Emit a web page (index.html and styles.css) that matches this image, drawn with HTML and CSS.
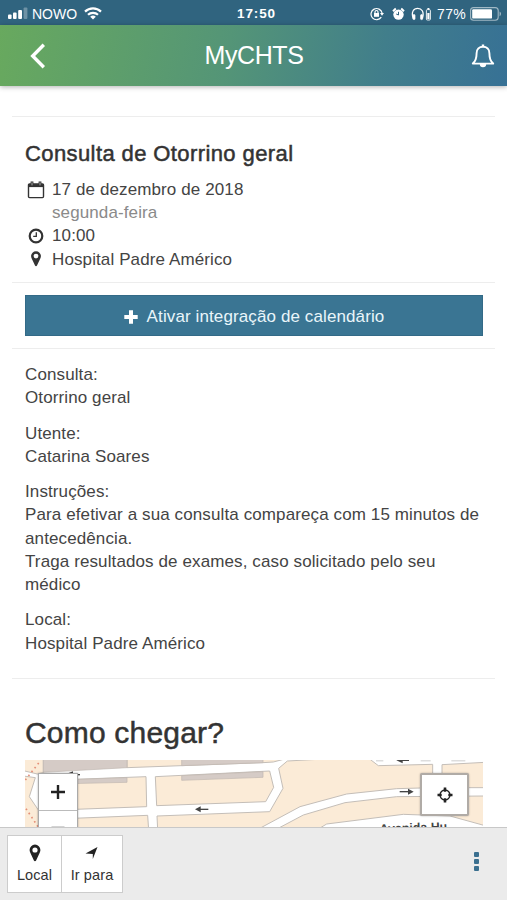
FILE: index.html
```
<!DOCTYPE html>
<html lang="pt">
<head>
    <meta charset="UTF-8">
    <meta name="viewport" content="width=device-width, initial-scale=1.0">
    <title>MyCHTS</title>
    <link rel="stylesheet" href="styles.css">
</head>
<body>

    <!-- Phone status bar -->
    <div class="status-bar">
        <div class="status-left">
            <svg width="20" height="13" viewBox="0 0 20 13" fill="#fff">
                <rect x="0" y="7.5" width="3.6" height="4.5" rx="1"/>
                <rect x="5" y="5.5" width="3.6" height="6.5" rx="1"/>
                <rect x="10.2" y="3" width="3.8" height="9" rx="1"/>
                <rect x="15.6" y="0.5" width="3.8" height="11.5" rx="1" opacity=".3"/>
            </svg>
            <span class="carrier">NOWO</span>
            <svg class="wifi" width="18" height="13" viewBox="0 0 18 13" fill="none" stroke="#fff" stroke-width="2.2">
                <path d="M1 4.6a11.5 11.5 0 0 1 16 0"/>
                <path d="M4 7.8a7.2 7.2 0 0 1 10 0"/>
                <path d="M9 12.6L6.2 9.8a4 4 0 0 1 5.6 0z" fill="#fff" stroke="none"/>
            </svg>
        </div>
        <span class="clock">17:50</span>
        <div class="status-right">
            <svg width="14" height="14" viewBox="0 0 14 14" fill="none" stroke="#fff" stroke-width="1.2">
                <path d="M11.3 10.2A5.6 5.6 0 1 1 12.1 6"/>
                <path d="M10 6h4l-2 2.8z" fill="#fff" stroke="none"/>
                <rect x="4" y="6" width="5" height="3.8" fill="#fff" stroke="none"/>
                <path d="M5 6.5V5a1.5 1.5 0 0 1 3 0v1.5"/>
            </svg>
            <svg class="alarm" width="13" height="14" viewBox="0 0 13 14">
                <circle cx="6.5" cy="7.6" r="5.2" fill="#fff"/>
                <path d="M1 4.2L3.8 1.6M12 4.2L9.2 1.6" stroke="#fff" stroke-width="2"/>
                <path d="M6.5 4.8V8l-2.3-1" fill="none" stroke="#30647f" stroke-width="1"/>
            </svg>
            <svg width="20" height="14" viewBox="0 0 20 14" fill="none" stroke="#fff" stroke-width="1.3">
                <path d="M2.2 11.5C-.2 4.5 3 1.3 6.7 1.3s7 3.2 4.6 10.2"/>
                <rect x="2" y="7.6" width="2" height="5" rx=".8" fill="#fff" stroke-width=".7"/>
                <rect x="9.6" y="7.6" width="2" height="5" rx=".8" fill="#fff" stroke-width=".7"/>
                <rect x="15.4" y="2.6" width="4" height="10.4" rx="1" stroke-width=".9"/>
                <path d="M16.4 1h2v1.6h-2zM16.3 6h2.2v6h-2.2z" fill="#fff" stroke="none"/>
            </svg>
            <span class="percent">77%</span>
            <svg width="32" height="14" viewBox="0 0 32 14">
                <rect x=".6" y=".6" width="27.6" height="12.6" rx="3" fill="none" stroke="#fff" stroke-opacity=".55" stroke-width="1.1"/>
                <rect x="2.2" y="2.2" width="19.8" height="9.4" rx="1.2" fill="#fff"/>
                <path d="M29.6 4.6c1.8.8 1.8 3.8 0 4.6z" fill="#fff" fill-opacity=".6"/>
            </svg>
        </div>
    </div>

    <!-- App header -->
    <header>
        <svg class="back" width="16" height="26" viewBox="0 0 16 26" fill="none" stroke="#fff" stroke-width="3.4">
            <path d="M13.8 1.8L2.7 13l11.1 11.2"/>
        </svg>
        <div class="title">MyCHTS</div>
        <svg class="bell" width="24" height="26" viewBox="0 0 24 26">
            <path d="M1.8 20.6C4.9 18 5.6 14.6 5.6 10.2 5.6 6.4 8.2 3.7 12 3.7s6.4 2.7 6.4 6.5c0 4.4.7 7.8 3.8 10.4z" fill="none" stroke="#fff" stroke-width="1.9" stroke-linejoin="round"/>
            <path d="M10.8 1.6h2.4v2.2h-2.4zM8.8 21h6.4a3.2 3.2 0 0 1-6.4 0z" fill="#fff"/>
        </svg>
    </header>

    <!-- Appointment -->
    <main>
        <section class="summary">
            <h2>Consulta de Otorrino geral</h2>
            <ul>
                <li>
                    <svg width="18" height="18" viewBox="0 0 18 18" fill="none" stroke="#333">
                        <rect x="1.5" y="3" width="15" height="13.6" rx="1" stroke-width="1.4"/>
                        <path d="M1 4.6h16" stroke-width="3"/>
                        <path d="M5 .4v4.4M13 .4v4.4" stroke-width="2.8"/>
                        <path d="M5 1.4v3M13 1.4v3" stroke="#ccc" stroke-width=".8"/>
                    </svg>
                    17 de dezembro de 2018
                </li>
                <li class="weekday">segunda-feira</li>
                <li>
                    <svg width="18" height="18" viewBox="0 0 18 18" fill="none" stroke="#333">
                        <circle cx="9" cy="9" r="6.3" stroke-width="2.2"/>
                        <path d="M9.3 5.2v4.2H6.2" stroke-width="1.3"/>
                    </svg>
                    10:00
                </li>
                <li>
                    <svg width="18" height="18" viewBox="0 0 18 18" fill="#333">
                        <path fill-rule="evenodd" d="M9 1.2a4.9 4.9 0 0 0-4.9 4.9c0 1 .2 1.6.6 2.5L8 15.6c.4.9 1.6.9 2 0l3.3-7c.4-.9.6-1.5.6-2.5A4.9 4.9 0 0 0 9 1.2zm0 2.5a2.4 2.4 0 1 1 0 4.8 2.4 2.4 0 0 1 0-4.8z"/>
                    </svg>
                    Hospital Padre Américo
                </li>
            </ul>
        </section>

        <section class="actions">
            <button class="btn-calendar">
                <svg width="14" height="14" viewBox="0 0 14 14" stroke="#fff" stroke-width="4">
                    <path d="M7 .3v13.4M.3 7h13.4"/>
                </svg>
                <span>Ativar integração de calendário</span>
            </button>
        </section>

        <section class="details">
            <p>Consulta:<br>Otorrino geral</p>
            <p>Utente:<br>Catarina Soares</p>
            <p>Instruções:<br>
                Para efetivar a sua consulta compareça com 15 minutos de<br>
                antecedência.<br>
                Traga resultados de exames, caso solicitado pelo seu<br>
                médico</p>
            <p>Local:<br>Hospital Padre Américo</p>
        </section>

        <section class="directions">
            <h1>Como chegar?</h1>
            <div class="map">
                <svg class="streets" width="458" height="68" viewBox="75 180 1374 204">
                    <rect x="75" y="180" width="1374" height="204" fill="#fff"/>
                    <!-- Blocks -->
                    <g fill="#fbebd7" stroke="#c4beb8" stroke-width="3">
                        <path d="M70 175H130V218L112 222 70 212z"/>
                        <path d="M70 228L106 233 88 290 115 330V390H70z"/>
                        <path d="M381 175H862L820 186 789 188 381 203z"/>
                        <path d="M120 242L438 230 440 320 120 332z"/>
                        <path d="M466 230L809 213 821 262 797 305 470 317z"/>
                        <path d="M120 359L443 346 446 390H120z"/>
                        <path d="M471 348L809 335 849 265 836 205 862 183 1100 170 1135 197 1298 193V263L1190 266 1040 282 900 320 770 390H473z"/>
                        <path d="M825 390L910 345 1035 308 1190 290 1455 288V377L1350 348 1210 343 980 372 950 390z"/>
                        <path d="M1326 194L1455 187V263H1326z"/>
                    </g>
                    <!-- Buildings -->
                    <g fill="#d5cbc6" stroke="#c0b6b1" stroke-width="2">
                        <path d="M130 178H381V203L130 217z"/>
                        <path d="M545 178H789V188L545 197z"/>
                        <path d="M120 242L381 233V247L120 253z"/>
                        <path d="M545 227L789 215V232L545 241z"/>
                    </g>
                    <g stroke="#e58f78" stroke-width="5" stroke-dasharray="5 10">
                        <path d="M76 240L120 184M78 326L114 380"/>
                    </g>
                    <!-- One-way arrows -->
                    <g stroke="#444" stroke-width="4" fill="#444">
                        <path d="M625 328H598"/>
                        <path d="M585 328L602 319V337z" stroke="none"/>
                        <path d="M1199 275H1226"/>
                        <path d="M1241 275L1224 266V284z" stroke="none"/>
                        <path d="M1227 181H1203"/>
                        <path d="M1189 181L1208 173V190z" stroke="none"/>
                        <path d="M240 224H218"/>
                        <path d="M204 220L219 214V228z" stroke="none"/>
                    </g>
                    <path d="M1128 182H1150M1262 182H1292M1354 182H1396" stroke="#ddd" stroke-width="5"/>
                    <text class="street-name" x="1139" y="399" transform="rotate(-2 1140 395)">Avenida Hu</text>
                </svg>
                <div class="zoom">
                    <button>
                        <svg width="14" height="14" viewBox="0 0 14 14" stroke="#222" stroke-width="2.4"><path d="M7 0v14M0 7h14"/></svg>
                    </button>
                    <button>
                        <svg width="14" height="14" viewBox="0 0 14 14" stroke="#222" stroke-width="2.4"><path d="M.5 7h13"/></svg>
                    </button>
                </div>
                <button class="locate">
                    <svg width="16" height="16" viewBox="0 0 16 16" fill="none" stroke="#222">
                        <circle cx="8" cy="8" r="5" stroke-width="1.3"/>
                        <path d="M8 .5v4.2M8 11.3v4.2M.5 8h4.2M11.3 8h4.2" stroke-width="2.6"/>
                    </svg>
                </button>
            </div>
        </section>
    </main>

    <!-- Bottom toolbar -->
    <footer>
        <div class="btn-group">
            <button class="tool">
                <svg width="18" height="18" viewBox="0 0 18 18" fill="#222">
                    <path fill-rule="evenodd" d="M9 .6a5.4 5.4 0 0 0-5.4 5.4c0 1 .2 1.7.7 2.7l3.6 7.7c.5 1 1.7 1 2.2 0l3.6-7.7c.5-1 .7-1.700.7-2.700A5.4 5.4 0 0 0 9 .6zm0 2.8a2.6 2.6 0 1 1 0 5.2 2.600 2.600 0 0 1 0-5.200z"/>
                </svg>
                Local
            </button>
            <button class="tool">
                <svg width="18" height="18" viewBox="0 0 18 18" fill="#222">
                    <path d="M14.500 3L9.800 15V10L2.500 9.600z"/>
                </svg>
                Ir para
            </button>
        </div>
        <div class="more"><i></i><i></i><i></i></div>
    </footer>

</body>
</html>
```
FILE: styles.css
```
* {
    margin: 0;
    padding: 0;
    box-sizing: border-box;
}

body {
    height: 900px;
    display: flex;
    flex-direction: column;
    overflow: hidden;
    background-color: #fff;
    color: #444;
    font-family: "Liberation Sans", Arial, sans-serif;
    font-size: 17px;
    line-height: 23.2px;
    letter-spacing: 0.11px;
}

button {
    font: inherit;
    letter-spacing: inherit;
    color: inherit;
    border: none;
    background-color: #fff;
}

svg {
    display: block;
    flex-shrink: 0;
}

/* Status bar */
.status-bar {
    height: 25px;
    flex-shrink: 0;
    display: grid;
    grid-template-columns: 1fr auto 1fr;
    align-items: center;
    padding: 2px 5px 0 8px;
    background-color: #30647f;
    color: #fff;
    font-size: 14px;
    line-height: 20px;
}

.status-left,
.status-right {
    display: flex;
    align-items: center;
}

.status-right {
    justify-content: flex-end;
}

.carrier {
    margin-left: 4px;
    font-size: 14px;
    letter-spacing: 0;
}

.wifi {
    margin-left: 7px;
}

.clock {
    padding-left: 3px;
    font-size: 13.5px;
    font-weight: bold;
    letter-spacing: 0.9px;
}

.alarm {
    margin: 0 6px 0 8px;
}

.percent {
    margin: 0 4px 0 6px;
    letter-spacing: 0.3px;
}

/* Header */
header {
    height: 61px;
    flex-shrink: 0;
    display: flex;
    align-items: center;
    padding: 0 12px 0 30px;
    background: linear-gradient(100deg, #68a95e 0%, #549577 45%, #417e8b 75%, #377195 100%);
    box-shadow: 0 1px 5px rgba(0,0,0,0.3);
    color: #fff;
}

.title {
    flex: 1;
    text-align: center;
    font-size: 25px;
    line-height: 30px;
    letter-spacing: -0.4px;
    padding: 0 9px 2px 0;
}

/* Sections */
main {
    flex: 1;
    min-height: 0;
    overflow: hidden;
    padding: 30px 12px 0;
}

section {
    border-top: 1px solid #ededed;
    padding: 0 12px 0 13px;
}

h1,
h2 {
    color: #333;
    font-weight: normal;
    -webkit-text-stroke: 0.5px #333;
}

h2 {
    padding-top: 24px;
    font-size: 22px;
    line-height: 26px;
    letter-spacing: 0.4px;
}

.summary {
    height: 166px;
}

.summary ul {
    list-style: none;
    padding-top: 11px;
}

.summary li {
    display: flex;
    align-items: center;
    gap: 7px;
    height: 23.2px;
    padding-left: 2px;
}

.summary .weekday {
    padding-left: 27px;
    color: #8a8a8a;
}

.actions {
    height: 66px;
    padding-top: 12px;
}

.btn-calendar {
    width: 100%;
    height: 41px;
    display: flex;
    align-items: center;
    justify-content: center;
    gap: 9px;
    background-color: #3a7593;
    border: 1px solid #336a87;
    color: #e9f5fa;
    padding-top: 2px;
}

.details {
    height: 330px;
    padding-top: 14px;
}

.details p {
    margin-bottom: 12.2px;
    white-space: nowrap;
}

.directions h1 {
    padding-top: 36px;
    margin-bottom: 10px;
    font-size: 30px;
    line-height: 35px;
    letter-spacing: 0.2px;
}

/* Map */
.map {
    position: relative;
    height: 68px;
    overflow: hidden;
}

.street-name {
    font-size: 37px;
    font-weight: bold;
    fill: #444;
}

.zoom {
    position: absolute;
    left: 13px;
    top: 13px;
    width: 40px;
    border: 1px solid #aaa;
    box-shadow: 0 0 2px rgba(0,0,0,0.3);
}

.zoom button {
    width: 38px;
    height: 36px;
    display: flex;
    align-items: center;
    justify-content: center;
}

.zoom button + button {
    height: 34px;
    border-top: 1px solid #bbb;
}

.locate {
    position: absolute;
    left: 395px;
    top: 13px;
    width: 49px;
    height: 43px;
    display: flex;
    align-items: center;
    justify-content: center;
    border: 2px solid #b0aba6;
    border-radius: 2px;
    box-shadow: 0 0 2px rgba(0,0,0,0.3);
}

/* Bottom toolbar */
footer {
    height: 73px;
    flex-shrink: 0;
    display: flex;
    justify-content: space-between;
    align-items: center;
    padding: 0 28px 0 7px;
    background-color: #ebebeb;
    border-top: 1px solid #c8c8c8;
    z-index: 1;
}

.btn-group {
    display: flex;
    border: 1px solid #ccc;
}

.tool {
    width: 53px;
    height: 56px;
    display: flex;
    flex-direction: column;
    align-items: center;
    padding-top: 8px;
    font-size: 14.5px;
    line-height: 18px;
    letter-spacing: 0.1px;
    color: #333;
    gap: 4px;
}

.tool + .tool {
    width: 61px;
    border-left: 1px solid #ccc;
}

.more {
    display: flex;
    flex-direction: column;
    gap: 2px;
    margin-top: -5px;
}

.more i {
    width: 5px;
    height: 5px;
    border-radius: 1px;
    background-color: #3a6f8f;
}
```
